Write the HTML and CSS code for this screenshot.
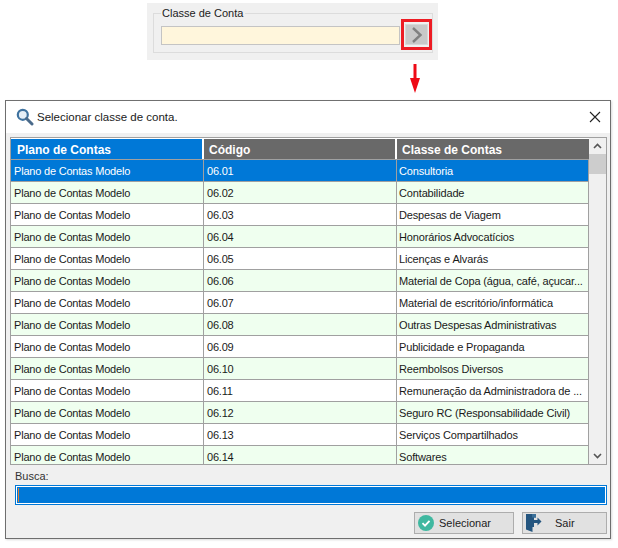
FILE: index.html
```html
<!DOCTYPE html>
<html lang="pt">
<head>
<meta charset="utf-8">
<title>Selecionar classe de conta</title>
<link rel="stylesheet" href="styles.css">
</head>
<body>
<div class="page">
  <section class="top">
    <div class="group">
      <span class="legend">Classe de Conta</span>
      <div class="input-row">
        <div class="yellow-input"></div>
        <div class="lookup-frame">
          <div class="lookup">
            <svg width="12" height="16" viewBox="0 0 12 16"><path d="M2 1 L9.5 8 L2 15" fill="none" stroke="#808080" stroke-width="2.4"/></svg>
          </div>
        </div>
      </div>
    </div>
  </section>
  <svg class="arrow" width="10" height="30" viewBox="0 0 10 30"><path d="M3.5 0h3v14h3.5l-5 15l-5-15h3.500z" fill="#ee0a16"/></svg>
  <section class="dialog">
    <header class="titlebar">
      <svg class="search-icon" width="18" height="18" viewBox="0 0 18 18"><circle cx="6.800" cy="6.800" r="5" fill="#e6eff7" stroke="#3f729f" stroke-width="2.200"/><path d="M10.500 10.500l5.500 5.500" stroke="#4a6a8a" stroke-width="3" stroke-linecap="round"/></svg>
      <span class="title">Selecionar classe de conta.</span>
      <svg class="close" width="12" height="12" viewBox="0 0 12 12"><path d="M1 1l10 10M11 1L1 11" stroke="#222" stroke-width="1.1"/></svg>
    </header>
    <div class="body">
      <div class="grid-wrap">
        <div class="grid">
          <div class="row head">
            <div class="cell c1 h-blue">Plano de Contas</div>
            <div class="cell c2">Código</div>
            <div class="cell c3">Classe de Contas</div>
          </div>
          <div class="row selected"><div class="cell c1">Plano de Contas Modelo</div><div class="cell c2">06.01</div><div class="cell c3">Consultoria</div></div>
          <div class="row alt"><div class="cell c1">Plano de Contas Modelo</div><div class="cell c2">06.02</div><div class="cell c3">Contabilidade</div></div>
          <div class="row"><div class="cell c1">Plano de Contas Modelo</div><div class="cell c2">06.03</div><div class="cell c3">Despesas de Viagem</div></div>
          <div class="row alt"><div class="cell c1">Plano de Contas Modelo</div><div class="cell c2">06.04</div><div class="cell c3">Honorários Advocatícios</div></div>
          <div class="row"><div class="cell c1">Plano de Contas Modelo</div><div class="cell c2">06.05</div><div class="cell c3">Licenças e Alvarás</div></div>
          <div class="row alt"><div class="cell c1">Plano de Contas Modelo</div><div class="cell c2">06.06</div><div class="cell c3">Material de Copa (água, café, açucar...</div></div>
          <div class="row"><div class="cell c1">Plano de Contas Modelo</div><div class="cell c2">06.07</div><div class="cell c3">Material de escritório/informática</div></div>
          <div class="row alt"><div class="cell c1">Plano de Contas Modelo</div><div class="cell c2">06.08</div><div class="cell c3">Outras Despesas Administrativas</div></div>
          <div class="row"><div class="cell c1">Plano de Contas Modelo</div><div class="cell c2">06.09</div><div class="cell c3">Publicidade e Propaganda</div></div>
          <div class="row alt"><div class="cell c1">Plano de Contas Modelo</div><div class="cell c2">06.10</div><div class="cell c3">Reembolsos Diversos</div></div>
          <div class="row"><div class="cell c1">Plano de Contas Modelo</div><div class="cell c2">06.11</div><div class="cell c3">Remuneração da Administradora de ...</div></div>
          <div class="row alt"><div class="cell c1">Plano de Contas Modelo</div><div class="cell c2">06.12</div><div class="cell c3">Seguro RC (Responsabilidade Civil)</div></div>
          <div class="row"><div class="cell c1">Plano de Contas Modelo</div><div class="cell c2">06.13</div><div class="cell c3">Serviços Compartilhados</div></div>
          <div class="row alt last"><div class="cell c1">Plano de Contas Modelo</div><div class="cell c2">06.14</div><div class="cell c3">Softwares</div></div>
        </div>
        <div class="scrollbar">
          <svg width="17" height="16" viewBox="0 0 17 16"><path d="M5 10l3.500-3.500L12 10" fill="none" stroke="#555" stroke-width="1.600"/></svg>
          <div class="thumb"></div>
          <div class="track"></div>
          <svg width="17" height="16" viewBox="0 0 17 16"><path d="M5 6l3.500 3.500L12 6" fill="none" stroke="#555" stroke-width="1.600"/></svg>
        </div>
      </div>
      <label class="search-label">Busca:</label>
      <div class="search-input"><span class="caret"></span></div>
      <div class="buttons">
        <div class="btn btn-select">
          <svg width="18" height="18" viewBox="0 0 18 18"><circle cx="9" cy="9" r="8" fill="#3fb8a0"/><path d="M5.500 9.200l2.500 2.400 4.500-4.800" fill="none" stroke="#fff" stroke-width="1.800"/></svg>
          <span>Selecionar</span>
        </div>
        <div class="btn btn-exit">
          <svg width="18" height="18" viewBox="0 0 18 18"><path d="M1 0h10v3.500H9V13H7.500v5L1 15.500z" fill="#24557f"/><path d="M7 0h4v3.500H7z" fill="#3b7099"/><path d="M9 6h3.500V3.500L16.500 7.500l-4 4V9H9z" fill="#24557f"/></svg>
          <span>Sair</span>
        </div>
      </div>
    </div>
  </section>
</div>
</body>
</html>
```
FILE: styles.css
```css
* { box-sizing: border-box; }
html, body { margin: 0; padding: 0; background: #fff; }
body { width: 618px; height: 548px; overflow: hidden; font-family: "Liberation Sans", Arial, sans-serif; font-size: 11px; color: #1a1a1a; }
.page { display: flex; flex-direction: column; align-items: flex-start; padding: 3px 0 0 5px; }
.top { width: 291px; height: 57px; margin-left: 142px; background: #f0f0f0; padding: 10px 5px 0 6px; }
.group { position: relative; height: 40px; border: 1px solid #dcdcdc; padding: 5px 0 0 7px; width: 280px; }
.legend { position: absolute; left: 7px; top: -8px; background: #f0f0f0; padding: 0 2px 0 1px; font-size: 11px; line-height: 14px; color: #222; }
.input-row { display: flex; align-items: flex-start; }
.yellow-input { width: 239px; height: 19px; margin-top: 7px; background: #fff6dc; border: 1px solid #c4c4c4; }
.lookup-frame { width: 31px; height: 31px; margin-left: 1px; border: 3px solid #ed1c24; padding: 2px 1px; }
.lookup { width: 23px; height: 21px; background: #c8c8c8; border: 1px solid #d8d8d8; display: flex; align-items: center; justify-content: center; }
.arrow { margin: 4px 0 0 405px; flex: none; }
.dialog { width: 606px; height: 439px; margin-top: 6px; background: #f0f0f0; border: 1px solid #6e6e6e; border-top-color: #707070; box-shadow: 1px 1px 2px rgba(0,0,0,0.15); display: flex; flex-direction: column; }
.titlebar { height: 32px; flex: none; background: #fff; display: flex; align-items: center; padding: 0 9px 0 10px; }
.search-icon { flex: none; margin-right: 3px; }
.title { flex: 1; font-size: 11.5px; color: #1a1a1a; }
.body { padding: 4px 3px 0 4px; flex: 1; }
.grid-wrap { display: flex; width: 597px; height: 328px; background: #fff; border: 1px solid #a0a0a0; overflow: hidden; }
.grid { width: 578px; flex: none; }
.row { display: flex; height: 22px; background: #fff; border-bottom: 1px solid #a0a0a0; }
.row .cell { font-size: 11px; letter-spacing: -0.2px; line-height: 22px; white-space: nowrap; overflow: hidden; border-right: 1px solid #a0a0a0; padding-left: 3px; }
.row .c3 { padding-left: 2px; letter-spacing: -0.15px; }
.row.alt { background: #efffef; }
.row.selected { background: #0078d7; color: #fff; }
.c1 { width: 193px; }
.c2 { width: 193px; }
.c3 { width: 192px; }
.row.head { height: 22px; background: #696969; color: #fff; border-bottom: 1px solid #a0a0a0; border-top: 1px solid #fff; }
.row.head .cell { font-weight: bold; font-size: 12px; letter-spacing: 0; line-height: 22px; padding-left: 6px; border-right: 2px solid #fff; }
.row.head .h-blue { background: #0078d7; }
.row.head .c2 { padding-left: 5px; }
.row.head .c3 { border-right: 0; padding-left: 5px; }
.row.last { border-bottom: 0; }
.scrollbar { flex: 1; display: flex; flex-direction: column; background: #f0f0f0; }
.scrollbar svg { flex: none; display: block; }
.thumb { height: 20px; background: #cdcdcd; flex: none; }
.track { flex: 1; }
.search-label { display: block; margin: 4px 0 0 5px; font-size: 11px; line-height: 14px; color: #333; }
.search-input { width: 592px; height: 20px; margin: 2px 0 0 5px; background: #0078d7; border: 1px solid #0078d7; box-shadow: inset 0 0 0 1px #fff; padding: 2px; }
.caret { display: block; width: 1px; height: 14px; background: #e08030; }
.buttons { display: flex; justify-content: flex-end; gap: 8px; margin-top: 7px; }
.btn { height: 22px; background: #e1e1e1; border: 1px solid #adadad; display: flex; align-items: center; font-size: 11px; color: #222; }
.btn-select { width: 100px; padding-left: 2px; gap: 4px; }
.btn-exit { width: 85px; padding-left: 2px; gap: 12px; }
```
